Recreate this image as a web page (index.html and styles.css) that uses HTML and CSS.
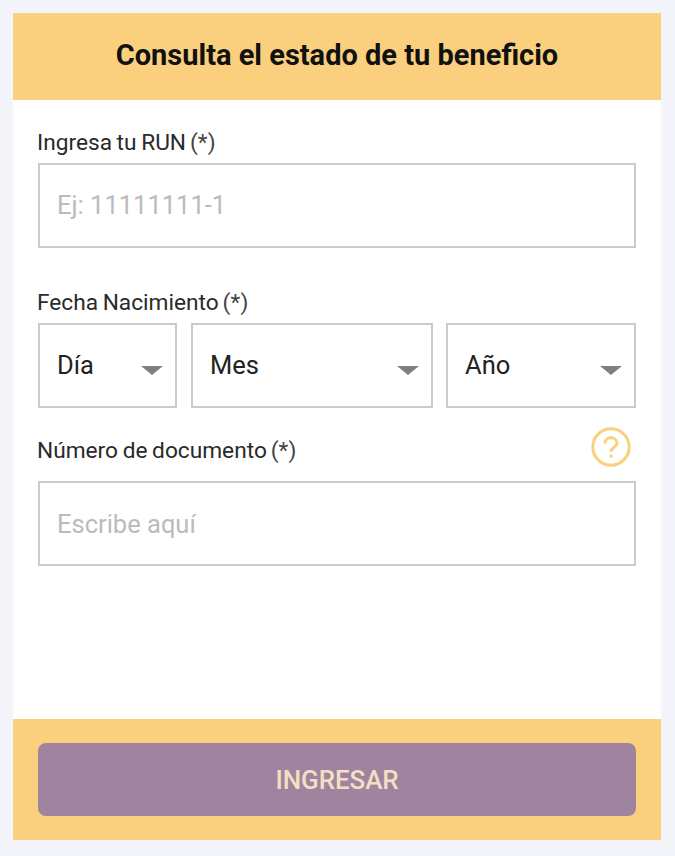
FILE: index.html
```html
<!DOCTYPE html>
<html lang="es">
<head>
  <meta charset="UTF-8">
  <meta name="viewport" content="width=device-width, initial-scale=1.0">
  <title>Consulta el estado de tu beneficio</title>
  <link rel="stylesheet" href="styles.css">
</head>
<body>
  <form class="card">
    <h1 class="card-title">Consulta el estado de tu beneficio</h1>

    <div class="card-body">
      <div class="field field-run">
        <label class="field-label" for="run">Ingresa tu RUN<span class="req"> (*)</span></label>
        <input class="text-input" id="run" type="text" placeholder="Ej: 11111111-1">
      </div>

      <div class="field field-date">
        <label class="field-label">Fecha Nacimiento<span class="req"> (*)</span></label>
        <div class="date-row">
          <div class="select-box">
            <select class="select-input"><option>Día</option></select>
          </div>
          <div class="select-box">
            <select class="select-input"><option>Mes</option></select>
          </div>
          <div class="select-box">
            <select class="select-input"><option>Año</option></select>
          </div>
        </div>
      </div>

      <div class="field field-doc">
        <div class="label-row">
          <label class="field-label" for="doc">Número de documento<span class="req"> (*)</span></label>
          <svg class="help-icon" width="40" height="40" viewBox="0 0 40 40" fill="none" stroke="#fad07e" stroke-width="3" aria-hidden="true">
            <circle cx="20" cy="20" r="18.2"/>
            <path d="M14 16.500c0-3.400 2.600-5.700 6-5.700s6 2.200 6 5.200c0 4.300-6 4.500-6 8.800"/>
            <path d="M20 27.500v3"/>
          </svg>
        </div>
        <input class="text-input" id="doc" type="text" placeholder="Escribe aquí">
      </div>
    </div>

    <div class="card-footer">
      <button class="submit-btn" type="button">INGRESAR</button>
    </div>
  </form>
</body>
</html>
```

FILE: styles.css
```css
* {
  box-sizing: border-box;
}

body {
  margin: 0;
  padding: 13px 14px 16px 13px;
  background-color: #f4f4fb;
  font-family: Roboto, Arial, sans-serif;
  color: #222;
}

.card {
  display: flex;
  flex-direction: column;
  height: 827px;
  background: #fff;
}

.card-title {
  margin: 0;
  height: 87px;
  line-height: 84px;
  background: #fad07e;
  color: #111;
  font-size: 29px;
  font-weight: 700;
  text-align: center;
}

.card-body {
  flex: 1;
  padding: 0 25px;
}

.field-run {
  padding-top: 27px;
}

.field-date {
  padding-top: 39px;
}

.field-doc {
  padding-top: 14px;
}

.field-label {
  display: block;
  height: 36px;
  line-height: 32px;
  font-size: 22.7px;
  word-spacing: -1px;
  margin-left: -1px;
  color: #2a2a2a;
}

.req {
  word-spacing: -2px;
  letter-spacing: 0.2px;
  color: #444;
}

.label-row {
  display: flex;
  justify-content: space-between;
  align-items: flex-start;
  height: 59px;
}

.label-row .field-label {
  padding-top: 13px;
  height: auto;
}

.help-icon {
  margin: 5px 5px 0 0;
}

.text-input {
  display: block;
  width: 100%;
  height: 85px;
  padding: 0 17px 2px;
  border: 2px solid #cbcbcb;
  border-radius: 0;
  outline: none;
  font-family: inherit;
  font-size: 25.5px;
  color: #222;
}

.field-doc .text-input {
  padding-bottom: 0;
}

.text-input::placeholder {
  color: #bbb;
  opacity: 1;
}

.date-row {
  display: flex;
  gap: 13px;
}

.select-box {
  position: relative;
  flex: 1 1 0;
  min-width: 0;
}

.select-box:first-child {
  flex: 0 0 139px;
  margin-right: 1px;
}

.select-box:nth-child(2) {
  flex: 0 0 242px;
}

.select-box::after {
  content: "";
  position: absolute;
  right: 14px;
  top: 43px;
  border-left: 11px solid transparent;
  border-right: 11px solid transparent;
  border-top: 9px solid #808080;
  pointer-events: none;
}

.select-input {
  display: block;
  width: 100%;
  height: 85px;
  padding: 0 17px 2px;
  border: 2px solid #cbcbcb;
  border-radius: 0;
  outline: none;
  background: #fff;
  appearance: none;
  font-family: inherit;
  font-size: 25.5px;
  color: #222;
}

.card-footer {
  padding: 24px 25px;
  background: #fad07e;
}

.submit-btn {
  display: block;
  width: 100%;
  height: 73px;
  border: 0;
  border-radius: 8px;
  background: #a0849f;
  color: #f3dfc4;
  font-family: inherit;
  font-size: 26px;
  font-weight: 500;
  letter-spacing: -0.1px;
}
```
